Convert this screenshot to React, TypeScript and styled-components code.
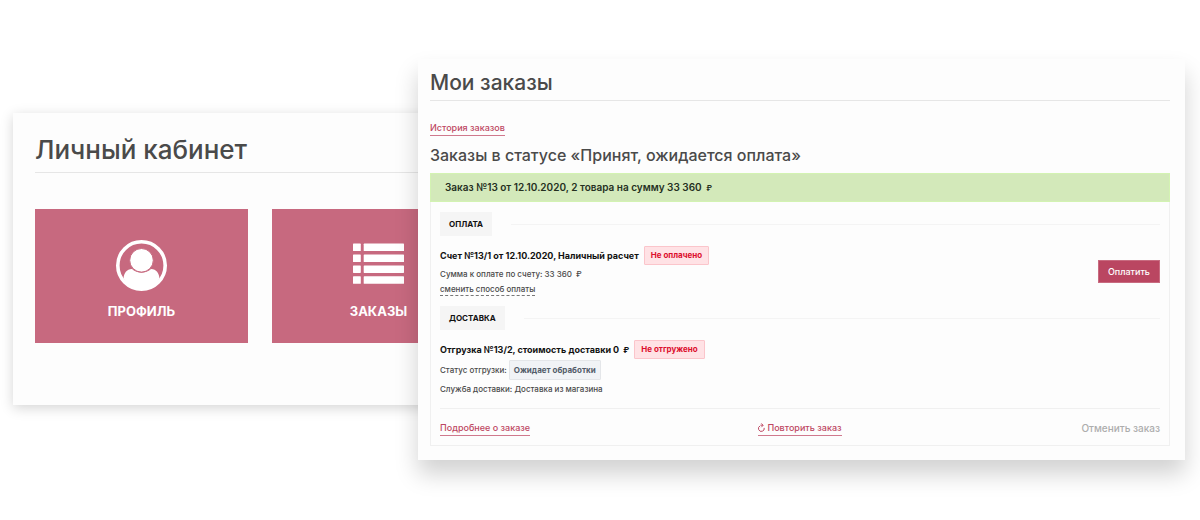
import React from "react";
import styled, { createGlobalStyle } from "styled-components";

const GlobalStyle = createGlobalStyle`
  *, *::before, *::after { box-sizing: border-box; }
  html { background: #ffffff; }
  body { margin: 0; font-family: Inter, "Noto Sans", sans-serif; color: #4a4a4a; }
  h1, h2, h3, p { margin: 0; }
`;

const Page = styled.main`
  display: grid;
  grid-template-columns: 405fr 767fr;
  align-items: start;
  padding: 59px 15px 60px 13px;
`;

const Panel = styled.section`
  grid-row: 1;
  min-width: 0;
  background: #fdfdfd;
`;

const AccountPanel = styled(Panel)`
  grid-column: 1 / -1;
  margin: 54px 80px 0 0;
  padding: 20px 22px 62px;
  overflow: hidden;
  box-shadow: 0 3px 12px rgba(0, 0, 0, 0.17);
`;

const OrdersPanel = styled(Panel)`
  grid-column: 2;
  z-index: 1;
  padding: 8px 15px 14px 12px;
  box-shadow: 0 14px 22px rgba(0, 0, 0, 0.18);
`;

const Title = styled.h1<{ $large?: boolean }>`
  font-size: ${(p) => (p.$large ? 26 : 21)}px;
  line-height: ${(p) => (p.$large ? 34 : 32)}px;
  padding-bottom: ${(p) => (p.$large ? 5 : 1)}px;
  font-weight: 500;
  border-bottom: 1px solid #e6e6e6;
`;

const Tiles = styled.nav`
  display: flex;
  gap: 24px;
  margin-top: 36px;
`;

const Tile = styled.a`
  flex: 0 0 213px;
  height: 134px;
  display: flex;
  flex-direction: column;
  align-items: center;
  gap: 10px;
  padding-top: 31px;
  background: #c7697f;
  color: #ffffff;
  font-size: 13px;
  line-height: 20px;
  font-weight: 700;
  text-decoration: none;
`;

const Subtitle = styled.h2`
  margin: 8px 0 7px;
  font-size: 16px;
  line-height: 22px;
  font-weight: 500;
`;

const PinkLink = styled.a`
  display: inline-flex;
  align-items: center;
  gap: 2px;
  font-size: 9px;
  line-height: 14px;
  font-weight: 500;
  color: #bd4762;
  text-decoration: none;
  border-bottom: 1px solid #d0798d;
`;

const History = styled.div`
  display: flex;
  margin-top: 20px;
`;

const OrderHead = styled.h3`
  padding: 0 14px;
  background: #d3e9ba;
  border: 1px solid #d3f3b2;
  color: #25301f;
  font-size: 10px;
  line-height: 26px;
  font-weight: 600;
`;

const OrderBody = styled.div`
  padding: 10px 9px 9px;
  border: 1px solid #f0f0f0;
  border-top: 0;
`;

const SectionHead = styled.div`
  display: flex;
  align-items: center;
  gap: 19px;
  &::after {
    content: "";
    flex: 1;
    height: 1px;
    background: #f4f4f4;
  }
`;

const SectionLabel = styled.h3`
  padding: 0 9px;
  background: #f5f5f5;
  color: #111111;
  font-size: 8px;
  line-height: 24px;
  font-weight: 700;
`;

const Block = styled.div`
  display: flex;
  align-items: center;
  justify-content: space-between;
  padding: 10px 0;
`;

const Details = styled.div`
  display: flex;
  flex-direction: column;
  align-items: flex-start;
`;

const Line = styled.p<{ $strong?: boolean; $spaced?: boolean }>`
  display: flex;
  align-items: center;
  gap: ${(p) => (p.$strong ? 5 : 2)}px;
  margin-top: ${(p) => (p.$spaced ? 1 : 0)}px;
  font-size: ${(p) => (p.$strong ? 9 : 8)}px;
  line-height: 18px;
  font-weight: ${(p) => (p.$strong ? 700 : 500)};
  color: ${(p) => (p.$strong ? "#111111" : "#4a4a4a")};
`;

const Ruble = styled.span`
  margin-left: 2px;
  font-size: 8px;
`;

const Badge = styled.span<{ $muted?: boolean }>`
  padding: 0 ${(p) => (p.$muted ? 4 : 6)}px;
  border: 1px solid ${(p) => (p.$muted ? "#e4e6e9" : "#fbc5cb")};
  border-radius: 1px;
  background: ${(p) => (p.$muted ? "#f1f3f6" : "#ffe2e5")};
  color: ${(p) => (p.$muted ? "#535c69" : "#dc0f2d")};
  font-size: 8px;
  line-height: ${(p) => (p.$muted ? 18 : 17)}px;
  font-weight: 700;
`;

const ChangeLink = styled.a`
  color: #4a4a4a;
  font-size: 8px;
  line-height: 12px;
  font-weight: 500;
  text-decoration: none;
  border-bottom: 1px dashed #777777;
`;

const PayButton = styled.button`
  height: 23px;
  padding: 0 9px;
  border: 1px solid #c86b80;
  background: #ba4661;
  color: #ffffff;
  font-family: inherit;
  font-size: 9px;
  font-weight: 500;
`;

const Footer = styled.div`
  display: grid;
  grid-template-columns: 1fr auto 1fr;
  align-items: center;
  padding-top: 11px;
  border-top: 1px solid #f0f0f0;
`;

const CancelLink = styled.a`
  justify-self: end;
  color: #adadad;
  font-size: 10px;
  line-height: 16px;
  font-weight: 500;
  text-decoration: none;
`;

const Start = styled.div`
  display: flex;
`;

const ProfileIcon = () => (
  <svg width="51" height="51" viewBox="0 0 51 51" aria-hidden="true">
    <circle cx="25.5" cy="25.5" r="23.7" fill="none" stroke="#fff" strokeWidth="3.6" />
    <path
      d="M7.5 38.5C8 33 10.5 29.3 16 29C21.5 34 29.5 34 35 29C40.5 29.3 43 33 43.5 38.5C38.5 46 33 49.5 25.5 49.5C18 49.5 12.5 46 7.5 38.5Z"
      fill="#fff"
    />
    <circle cx="25.5" cy="20.3" r="11.8" fill="#fff" stroke="#c7697f" strokeWidth="1" />
  </svg>
);

const OrdersIcon = () => (
  <svg width="51" height="51" viewBox="0 0 51 51" fill="#fff" aria-hidden="true">
    {[3.6, 14.5, 25.4, 36.3].map((y) => (
      <g key={y}>
        <rect x="0" y={y} width="7.8" height="7.5" rx=".6" />
        <rect x="10.7" y={y} width="40.3" height="7.5" rx=".6" />
      </g>
    ))}
  </svg>
);

const RepeatIcon = () => (
  <svg width="7" height="10" viewBox="0 0 7 10" fill="none" stroke="#bd4762" aria-hidden="true">
    <path d="M1.9 3A2.9 2.9 0 1 0 6.2 4.9M2.4 2.2H5" />
    <path d="M3.3.4L5.2 2.3L3.3 4.2" strokeWidth=".9" />
  </svg>
);

export default function App() {
  return (
    <>
      <GlobalStyle />
      <Page>
        <AccountPanel>
          <Title $large>Личный кабинет</Title>
          <Tiles>
            <Tile href="#profile">
              <ProfileIcon />
              ПРОФИЛЬ
            </Tile>
            <Tile href="#orders">
              <OrdersIcon />
              ЗАКАЗЫ
            </Tile>
          </Tiles>
        </AccountPanel>
        <OrdersPanel>
          <Title>Мои заказы</Title>
          <History>
            <PinkLink href="#history">История заказов</PinkLink>
          </History>
          <Subtitle>Заказы в статусе «Принят, ожидается оплата»</Subtitle>
          <OrderHead>
            Заказ №13 от 12.10.2020, 2 товара на сумму 33 360 <Ruble>₽</Ruble>
          </OrderHead>
          <OrderBody>
            <SectionHead>
              <SectionLabel>ОПЛАТА</SectionLabel>
            </SectionHead>
            <Block>
              <Details>
                <Line $strong>
                  Счет №13/1 от 12.10.2020, Наличный расчет <Badge>Не оплачено</Badge>
                </Line>
                <Line>
                  <span>
                    Сумма к оплате по счету: 33 360 <Ruble>₽</Ruble>
                  </span>
                </Line>
                <ChangeLink href="#payment">сменить способ оплаты</ChangeLink>
              </Details>
              <PayButton type="button">Оплатить</PayButton>
            </Block>
            <SectionHead>
              <SectionLabel>ДОСТАВКА</SectionLabel>
            </SectionHead>
            <Block>
              <Details>
                <Line $strong>
                  <span>
                    Отгрузка №13/2, стоимость доставки 0 <Ruble>₽</Ruble>
                  </span>
                  <Badge>Не отгружено</Badge>
                </Line>
                <Line $spaced>
                  Статус отгрузки: <Badge $muted>Ожидает обработки</Badge>
                </Line>
                <Line>Служба доставки: Доставка из магазина</Line>
              </Details>
            </Block>
            <Footer>
              <Start>
                <PinkLink href="#details">Подробнее о заказе</PinkLink>
              </Start>
              <PinkLink href="#repeat">
                <RepeatIcon />
                Повторить заказ
              </PinkLink>
              <CancelLink href="#cancel">Отменить заказ</CancelLink>
            </Footer>
          </OrderBody>
        </OrdersPanel>
      </Page>
    </>
  );
}
